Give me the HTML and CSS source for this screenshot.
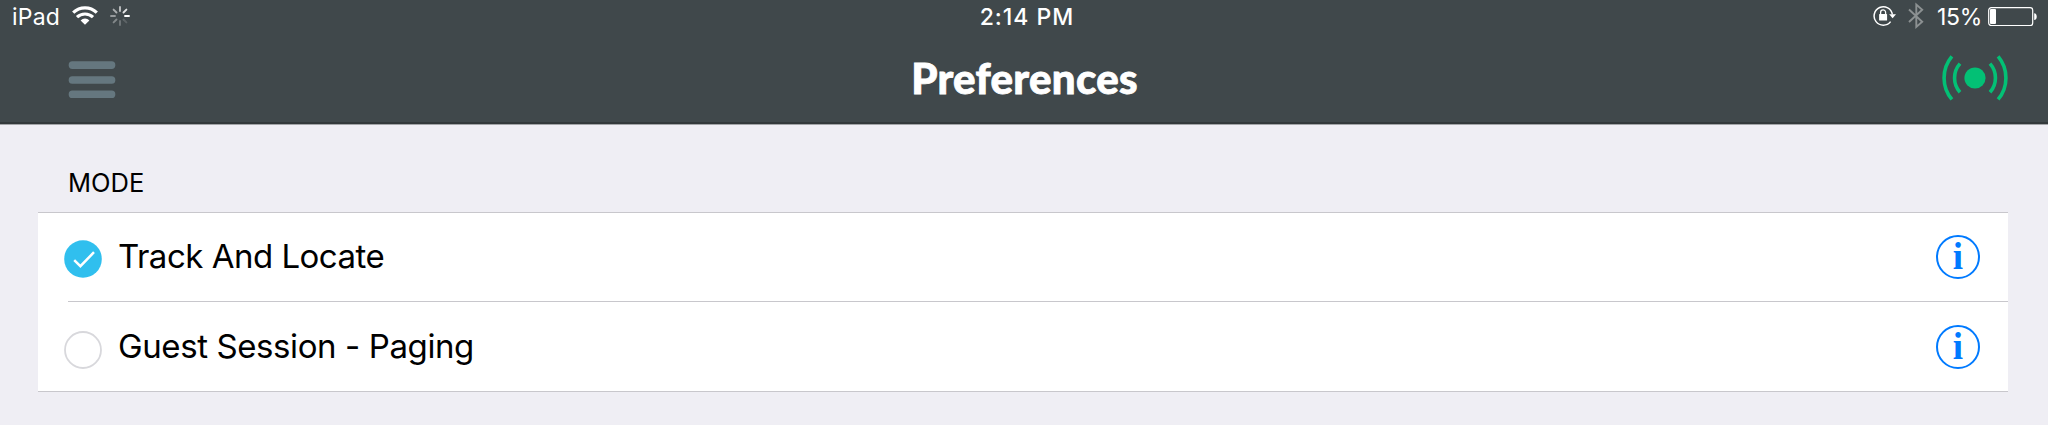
FILE: index.html
```html
<!DOCTYPE html>
<html lang="en">

<head>
    <meta charset="UTF-8">
    <meta name="viewport" content="width=device-width, initial-scale=1.0">
    <title>Preferences</title>
    <link rel="stylesheet" href="styles.css">
</head>

<body>
    <header class="header">
        <div class="status">
            <div class="status-left">
                <span class="device">iPad</span>
                <svg class="wifi" width="26" height="20" viewBox="0 0 26 20">
                    <g fill="none" stroke="#fff" stroke-width="3.2">
                        <path d="M1.2 6.6a17 17 0 0 1 23.6 0" />
                        <path d="M5 11.2a11.6 11.6 0 0 1 16 0" />
                    </g>
                    <path d="M13 18.8l-4.4-4.4a6.2 6.2 0 0 1 8.8 0z" fill="#fff" />
                </svg>
                <svg class="spinner" width="20" height="20" viewBox="0 0 20 20" stroke="#fff" stroke-width="1.9" stroke-linecap="round">
                    <path d="M10 1v4" opacity=".65" />
                    <path d="M13.5 6.5l2.9-2.9" opacity=".85" />
                    <path d="M15 10h4" />
                    <path d="M13.5 13.5l2.9 2.9" opacity=".15" />
                    <path d="M10 15v4" opacity=".25" />
                    <path d="M6.5 13.5l-2.9 2.9" opacity=".35" />
                    <path d="M5 10H1" opacity=".45" />
                    <path d="M6.5 6.5L3.6 3.6" opacity=".55" />
                </svg>
            </div>
            <div class="time">2:14 PM</div>
            <div class="status-right">
                <svg class="lock" width="24" height="22" viewBox="0 0 24 22">
                    <path d="M17.6 16.6A9.2 9.2 0 1 1 19.4 9.5" fill="none" stroke="#fff" stroke-width="1.5" />
                    <path d="M16.2 9.2h6.8l-3.4 4z" fill="#fff" />
                    <rect x="6.1" y="9.1" width="8" height="6.4" rx=".6" fill="#fff" />
                    <path d="M7.6 9.5V7.4a2.5 2.5 0 0 1 5 0v2.1" fill="none" stroke="#fff" stroke-width="1.3" />
                </svg>
                <svg class="bluetooth" width="16" height="28" viewBox="0 0 16 28">
                    <path d="M1 7.5l13.2 12.3L8.3 25V2.5l5.9 5.2L1 20" fill="none" stroke="#8c9192" stroke-width="1.9" />
                </svg>
                <span class="percent">15%</span>
                <svg class="battery" width="50" height="20" viewBox="0 0 50 20">
                    <rect x=".7" y=".7" width="44" height="17.8" rx="2.6" fill="none" stroke="#fff" stroke-width="1.2" />
                    <rect x="2" y="2" width="6" height="15" rx="1" fill="#fff" />
                    <path d="M46.2 6.2c3.4 0 3.4 6.8 0 6.8z" fill="#fff" />
                </svg>
            </div>
        </div>
        <div class="nav">
            <svg class="menu" width="48" height="38" viewBox="0 0 48 38" fill="#65777f">
                <rect x=".7" y=".3" width="46.6" height="7.6" rx="3.6" />
                <rect x=".7" y="15.2" width="46.6" height="7.6" rx="3.6" />
                <rect x=".7" y="29.4" width="46.6" height="7.6" rx="3.6" />
            </svg>
            <h1 class="title">Preferences</h1>
            <svg class="signal" width="68" height="46" viewBox="0 0 68 46">
                <circle cx="34" cy="23" r="10.6" fill="#03c075" />
                <g fill="none" stroke="#03c075" stroke-width="3.6">
                    <path d="M10.9 1.4a33.5 33.5 0 0 0 0 43" />
                    <path d="M19 8.6a21.5 21.5 0 0 0 0 28.6" />
                    <path d="M57.1 1.4a33.5 33.5 0 0 1 0 43" />
                    <path d="M49 8.6a21.5 21.5 0 0 1 0 28.6" />
                </g>
            </svg>
        </div>
    </header>

    <main class="content">
        <h2 class="section-title">MODE</h2>
        <ul class="list">
            <li class="row">
                <svg class="radio" width="38" height="38" viewBox="0 0 38 38">
                    <circle cx="19" cy="19" r="18.8" fill="#30bfee" />
                    <path d="M10.2 20.2l6.2 6L30 12.2" fill="none" stroke="#fff" stroke-width="2.5" />
                </svg>
                <span class="label track">Track And Locate</span>
                <span class="info">i</span>
            </li>
            <li class="row">
                <svg class="radio" width="38" height="38" viewBox="0 0 38 38">
                    <circle cx="19" cy="19" r="18" fill="#fff" stroke="#d8d8dc" stroke-width="1.8" />
                </svg>
                <span class="label guest">Guest Session - Paging</span>
                <span class="info">i</span>
            </li>
        </ul>
    </main>
</body>

</html>
```

FILE: styles.css
```css
* {
    margin: 0;
    padding: 0;
    box-sizing: border-box;
}

body {
    height: 425px;
    overflow: hidden;
    background: #efeef4;
    color: #000;
    font-family: Inter, "Liberation Sans", sans-serif;
}

.header {
    height: 125px;
    background: #40484b;
    border-bottom: 1px solid #a3a5a8;
    box-shadow: inset 0 -2px 0 #33393b;
    color: #fff;
}

.status {
    display: grid;
    grid-template-columns: 1fr auto 1fr;
    height: 33px;
    padding: 0 10px 0 12px;
    font-size: 23px;
    line-height: 34px;
}

.status-left,
.status-right {
    display: flex;
    align-items: flex-start;
}

.status-right {
    justify-content: flex-end;
}

.device {
    width: 60px;
    letter-spacing: 0.2px;
}

.wifi {
    margin-top: 6px;
}

.spinner {
    margin: 6px 0 0 12px;
}

.time {
    padding-left: 4px;
    font-weight: 500;
    letter-spacing: 1px;
}

.lock {
    margin-top: 5px;
}

.bluetooth {
    margin: 2px 13px 0 11px;
}

.percent {
    width: 51px;
    letter-spacing: -0.3px;
}

.battery {
    margin-top: 7px;
}

.nav {
    display: grid;
    grid-template-columns: 1fr auto 1fr;
    align-items: start;
    height: 89px;
    padding: 0 39px 0 68px;
}

.menu {
    margin-top: 28px;
}

.title {
    margin-top: 19px;
    padding-right: 28px;
    font-family: Lato, sans-serif;
    font-size: 42px;
    font-weight: 900;
    line-height: 52px;
    letter-spacing: 0.3px;
    -webkit-text-stroke: 0.8px #fff;
}

.signal {
    justify-self: end;
    margin-top: 22px;
}

.content {
    padding: 0 40px 0 38px;
}

.section-title {
    height: 87px;
    padding: 42px 0 0 30px;
    font-size: 25.5px;
    font-weight: 400;
    line-height: 32px;
}

.list {
    border-top: 1px solid #c8c7cc;
    border-bottom: 1px solid #c8c7cc;
    background: #fff;
    list-style: none;
}

.row {
    display: flex;
    align-items: center;
    height: 88px;
    padding: 0 28px 0 26px;
}

/* separator starts after the left inset */
.row + .row {
    height: 90px;
    margin-left: 30px;
    padding-left: 0;
    border-top: 1px solid #c8c7cc;
}

.radio {
    margin-top: 3px;
}

.row + .row .radio {
    margin: 6px 0 0 -4px;
}

.label {
    margin: 0 0 3px 16px;
    font-size: 33px;
    line-height: 44px;
}

.track {
    letter-spacing: -0.5px;
}

.guest {
    margin-bottom: 1px;
    letter-spacing: -0.4px;
}

.info {
    width: 44px;
    height: 44px;
    margin-left: auto;
    border: 2px solid #007aff;
    border-radius: 50%;
    color: #007aff;
    font-family: "Liberation Serif", serif;
    font-size: 37px;
    font-weight: 700;
    line-height: 40px;
    text-align: center;
}
```
